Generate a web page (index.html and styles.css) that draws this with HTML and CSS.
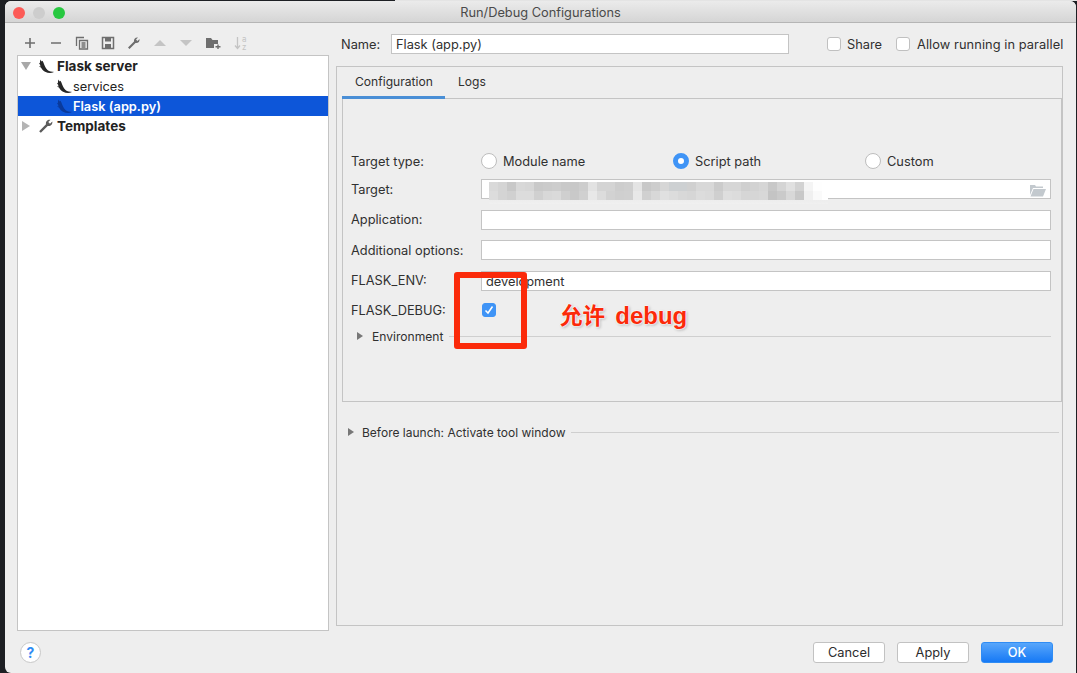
FILE: index.html
```html
<!DOCTYPE html>
<html>
<head>
    <title>Run/Debug Configurations</title>
    <link rel="stylesheet" href="styles.css">
</head>
<body>
    <svg class="defs" width="0" height="0">
        <symbol id="flask" viewBox="0 0 16 15">
            <path d="M2.500 0.500C0.800 5 2.800 10.500 7 12.700C10 14.200 13 14.300 15.500 13.300L15.500 12.700C12.500 13 10 12 8.200 9.500C6.700 7.500 5.800 4 4.500 1.800L3.600 2.600Z" fill="currentColor"/>
            <path d="M1 4.500L2.400 5M1.500 7.500L3 8" stroke="currentColor" stroke-width="0.800" fill="none"/>
        </symbol>
    </svg>
    <div class="window">
        <div class="titlebar">
            <div class="lights">
                <span class="light red"></span>
                <span class="light grey"></span>
                <span class="light green"></span>
            </div>
            <div class="title">Run/Debug Configurations</div>
        </div>
        <div class="main">
            <div class="sidebar">
                <div class="toolbar">
                    <svg width="14" height="14" viewBox="0 0 14 14"><path d="M7 2V12M2 7H12" stroke="#6e6e6e" stroke-width="1.600"/></svg>
                    <svg width="14" height="14" viewBox="0 0 14 14"><path d="M2 7H12" stroke="#6e6e6e" stroke-width="1.600"/></svg>
                    <svg width="14" height="14" viewBox="0 0 14 14"><path d="M1.500 10V1.500H9M4.500 4.500H12.500V13H4.500Z M6.500 7H10.500M6.500 9H10.500M6.500 11H10.500" stroke="#6e6e6e" stroke-width="1.300" fill="none"/></svg>
                    <svg width="14" height="14" viewBox="0 0 14 14"><path d="M1.500 1.500H12.500V12.500H1.500Z" stroke="#6e6e6e" stroke-width="1.500" fill="none"/><path d="M4 2H10V5.500H4ZM4 8H10V12.500H4Z" fill="#6e6e6e"/></svg>
                    <svg width="14" height="14" viewBox="0 0 14 14"><path d="M1 11.500L7 5.500C6.500 3 8.500 1 11 1.500L9 3.500L10.500 5L12.500 3C13 5.500 11 7.500 8.500 7L2.500 13Z" fill="#6e6e6e"/></svg>
                    <svg width="14" height="14" viewBox="0 0 14 14"><path d="M1 10L7 4L13 10Z" fill="#c4c4c4"/></svg>
                    <svg width="14" height="14" viewBox="0 0 14 14"><path d="M1 4L7 10L13 4Z" fill="#c4c4c4"/></svg>
                    <svg width="16" height="14" viewBox="0 0 16 14"><path d="M1 2H6L7.500 4H13V8H9V12H1Z" fill="#6e6e6e"/><path d="M13 8.500V13M10.500 10.800H15.500" stroke="#6e6e6e" stroke-width="1.400"/></svg>
                    <svg width="16" height="16" viewBox="0 0 16 16"><path d="M4.500 2V13M2 10.500L4.500 13.500L7 10.500" stroke="#c4c4c4" stroke-width="1.300" fill="none"/><text class="sort-letter" x="9" y="7">a</text><text class="sort-letter" x="9" y="15">z</text></svg>
                </div>
                <div class="tree">
                    <div class="tree-row bold">
                        <span class="arrow down"></span>
                        <svg class="flask" width="16" height="15"><use href="#flask"/></svg>
                        <span>Flask server</span>
                    </div>
                    <div class="tree-row child">
                        <svg class="flask" width="16" height="15"><use href="#flask"/></svg>
                        <span>services</span>
                    </div>
                    <div class="tree-row child selected">
                        <svg class="flask" width="16" height="15"><use href="#flask"/></svg>
                        <span>Flask (app.py)</span>
                    </div>
                    <div class="tree-row bold">
                        <span class="arrow right"></span>
                        <svg class="flask wrench" width="16" height="16" viewBox="0 0 14 14"><path d="M1 11.500L7 5.500C6.500 3 8.500 1 11 1.500L9 3.500L10.500 5L12.500 3C13 5.500 11 7.500 8.500 7L2.500 13Z" fill="#5c5c5c"/></svg>
                        <span>Templates</span>
                    </div>
                </div>
            </div>
            <div class="grip"></div>
            <div class="details">
                <div class="name-row">
                    <label class="name-label">Name:</label>
                    <div class="input name-input">Flask (app.py)</div>
                    <span class="check"></span><span class="check-label share">Share</span>
                    <span class="check"></span><span class="check-label parallel">Allow running in parallel</span>
                </div>
                <div class="outer-panel">
                    <div class="tabs">
                        <div class="tab active">Configuration</div>
                        <div class="tab">Logs</div>
                    </div>
                    <div class="config">
                        <div class="form">
                            <div class="form-row type-row">
                                <label>Target type:</label>
                                <div class="radios">
                                    <div class="radio-item wide"><span class="radio"></span>Module name</div>
                                    <div class="radio-item wide"><span class="radio on"></span>Script path</div>
                                    <div class="radio-item"><span class="radio"></span>Custom</div>
                                </div>
                            </div>
                            <div class="form-row">
                                <label>Target:</label>
                                <div class="input target">
                                    <div class="mosaic"></div>
                                    <svg class="folder" width="16" height="13" viewBox="0 0 16 13"><path d="M0 1H5L6 2.500H13V4H3L0 11Z M3.500 5H16L13 12.500H0.500Z" fill="#c3c9ce"/></svg>
                                </div>
                            </div>
                            <div class="form-row">
                                <label>Application:</label>
                                <div class="input"></div>
                            </div>
                            <div class="form-row">
                                <label>Additional options:</label>
                                <div class="input"></div>
                            </div>
                            <div class="form-row">
                                <label>FLASK_ENV:</label>
                                <div class="input">development</div>
                            </div>
                            <div class="form-row debug-row">
                                <label>FLASK_DEBUG:</label>
                                <span class="check on">
                                    <svg width="14" height="14" viewBox="0 0 14 14"><path d="M3.500 7.500L6 10L10.500 3.500" stroke="#fff" stroke-width="1.500" fill="none"/></svg>
                                </span>
                            </div>
                            <div class="section env-section">
                                <span class="arrow right small"></span>
                                <span>Environment</span>
                                <span class="rule"></span>
                            </div>
                        </div>
                    </div>
                    <div class="section launch-section">
                        <span class="arrow right small"></span>
                        <span>Before launch: Activate tool window</span>
                        <span class="rule"></span>
                    </div>
                </div>
            </div>
        </div>
        <div class="footer">
            <span class="help">?</span>
            <div class="buttons">
                <button>Cancel</button>
                <button>Apply</button>
                <button class="primary">OK</button>
            </div>
        </div>
    </div>

    <!-- annotation drawn on top of the screenshot -->
    <div class="mark-box"></div>
    <div class="mark-text">允许 <span class="mark-latin">debug</span></div>
</body>
</html>
```
FILE: styles.css
```css
* {
    box-sizing: border-box;
}

html, body {
    height: 100%;
}

body {
    margin: 0;
    background: linear-gradient(90deg, #1d1f23 395px, #e4e4e4 395px) top / 100% 1px no-repeat, #1d1f23;
    font-family: Inter, "Noto Sans CJK SC", sans-serif;
    font-size: 12.800px;
    color: #303030;
    position: relative;
    overflow: hidden;
}

.defs {
    display: block;
    position: absolute;
}

.window {
    margin: 1px 1px 0 5px;
    height: 672px;
    background-color: #eeeeee;
    border-radius: 6px 6px 0 6px;
    display: flex;
    flex-direction: column;
    overflow: hidden;
}

.titlebar {
    height: 22px;
    flex: none;
    padding-top: 2px;
    background: linear-gradient(#ebebeb, #d5d5d5);
    border-bottom: 1px solid #b5b5b5;
    display: flex;
    align-items: center;
    position: relative;
}

.lights {
    display: flex;
    gap: 8px;
    padding-left: 8px;
}

.light {
    width: 12px;
    height: 12px;
    border-radius: 50%;
}

.red { background-color: #fc5b57; }
.grey { background-color: #cdcdcd; }
.green { background-color: #27c840; }

.title {
    position: absolute;
    left: 0;
    right: 0;
    text-align: center;
    color: #4a4a4a;
}

.main {
    display: flex;
    height: 608px;
    flex: none;
    padding-top: 10px;
}

.sidebar {
    width: 312px;
    margin-left: 12px;
    flex: none;
}

.toolbar {
    height: 22px;
    display: flex;
    align-items: center;
    gap: 12px;
    padding: 0 0 2px 6px;
}

.sort-letter {
    font-size: 8px;
    fill: #c4c4c4;
}

.tree {
    height: 576px;
    background-color: #ffffff;
    border: 1px solid #c4c4c4;
}

.tree-row {
    height: 20px;
    display: flex;
    align-items: center;
    padding-left: 3px;
    color: #222222;
}

.tree-row.bold {
    font-weight: 700;
    font-size: 13.500px;
    gap: 3px;
}

.tree-row.child {
    padding-left: 38px;
    gap: 1px;
}

.tree-row.selected {
    background-color: #0d56d9;
    color: #ffffff;
    font-weight: 600;
}

.selected .flask {
    color: #0a3a9c;
}

.flask {
    color: #262626;
    flex: none;
}

.tree-row.bold .flask {
    margin-left: 4px;
}

.arrow {
    width: 0;
    height: 0;
    flex: none;
    border-style: solid;
    border-color: transparent;
}

.arrow.down {
    border-width: 8px 5px 0 5px;
    border-top-color: #a8a8a8;
}

.arrow.right {
    border-width: 5px 0 5px 8px;
    border-left-color: #b4b4b4;
    margin: 0 1px;
}

.arrow.small {
    border-width: 4px 0 4px 6px;
    border-left-color: #777777;
    margin: 0 9px 0 0;
}

.grip {
    width: 4px;
    flex: none;
    height: 14px;
    margin: 291px 2px 0 1px;
    background: radial-gradient(#bdbdbd 40%, transparent 45%) 0 0 / 2px 2px;
}

.details {
    flex: 1;
    padding-right: 13px;
}

.name-row {
    height: 22px;
    display: flex;
    align-items: center;
    margin-left: 5px;
    white-space: nowrap;
}

.name-label {
    width: 50px;
}

.input {
    height: 20px;
    flex: 1;
    background-color: #ffffff;
    border: 1px solid #c4c4c4;
    padding: 0 4px;
    line-height: 19px;
    position: relative;
}

.name-input {
    flex: none;
    width: 398px;
    margin-right: 38px;
}

.check {
    width: 14px;
    height: 14px;
    flex: none;
    background-color: #ffffff;
    border: 1px solid #c0c0c0;
    border-radius: 3px;
    margin-right: 6px;
}

.check-label.share {
    margin-right: 14px;
}

.check-label.parallel {
    margin-left: 1px;
    letter-spacing: 0.080px;
}

.check.on {
    background-color: #3f94f6;
    border-color: #3f94f6;
    margin: 0 0 0 1px;
    display: block;
}

.check.on svg {
    display: block;
    margin: -1px;
}

.outer-panel {
    height: 560px;
    margin-top: 11px;
    border: 1px solid #c4c4c4;
    padding: 0 0 0 5px;
}

.tabs {
    height: 32px;
    display: flex;
    border-bottom: 1px solid #c4c4c4;
    font-size: 12.100px;
}

.tab {
    padding: 0 13px;
    line-height: 29px;
    height: 32px;
}

.tab.active {
    width: 103px;
    border-bottom: 3px solid #4a8fd6;
}

.config {
    height: 303px;
    border: 1px solid #c4c4c4;
    border-top: none;
    padding: 52px 10px 0 8px;
}

.form-row {
    display: flex;
    align-items: center;
    height: 20px;
    margin-bottom: 10.500px;
}

.form-row label {
    width: 130px;
    flex: none;
    white-space: nowrap;
}

.type-row {
    margin-bottom: 8.400px;
}

.radios {
    display: flex;
}

.radio-item {
    display: flex;
    align-items: center;
    gap: 6px;
}

.radio-item.wide {
    width: 192px;
}

.radio {
    width: 16px;
    height: 16px;
    border-radius: 50%;
    background-color: #ffffff;
    border: 1px solid #bdbdbd;
}

.radio.on {
    border: 5px solid #3f94f6;
}

/* blurred-out path: three rows of 9px cells */
.mosaic {
    position: absolute;
    left: 7px;
    top: 2px;
    width: 339px;
    height: 22px;
    background:
        linear-gradient(90deg, #d9d9d9 0 9px, #d4d4d4 0 18px, #c8c8c8 0 27px, #d8d8d8 0 36px, #d6d6d6 0 45px, #c9c9c9 0 54px, #cbcbcb 0 63px, #cdcdcd 0 72px, #c9c9c9 0 81px, #c8c8c8 0 90px, #cdcdcd 0 99px, #e2e2e2 0 108px, #d4d4d4 0 126px, #cdcdcd 0 135px, #cfcfcf 0 144px, #e4e4e4 0 153px, #c8c8c8 0 162px, #cdcdcd 0 171px, #d6d6d6 0 180px, #cdd0d2 0 198px, #d0d0d0 0 207px, #d8d8d8 0 225px, #cbcbcb 0 234px, #d6d6d6 0 252px, #cfcfcf 0 261px, #d2d2d2 0 270px, #d6d6d6 0 279px, #c8c8c8 0 288px, #d4d4d4 0 297px, #e0e0e0 0 306px, #d2d2d2 0 315px, #f4f4f4 0 324px, #fefefe 0 333px, #ffffff 0) 0 0 / 100% 9px no-repeat,
        linear-gradient(90deg, #dcdcdc 0 9px, #d4d4d4 0 18px, #d0d0d0 0 27px, #dcdcdc 0 45px, #d0d0d0 0 54px, #d8d8d8 0 63px, #dadada 0 72px, #cfcfcf 0 81px, #c9c9c9 0 90px, #d0d0d0 0 99px, #e8e8e8 0 108px, #dcdcdc 0 117px, #d2d2d2 0 126px, #cfcfcf 0 135px, #d0d0d0 0 144px, #e8e8e8 0 153px, #d0d0d0 0 162px, #d8d8d8 0 171px, #e0e0e0 0 180px, #dcdcdc 0 189px, #d8d8d8 0 198px, #d6d6d6 0 207px, #dcdcdc 0 216px, #dadada 0 225px, #cfcfcf 0 234px, #dedede 0 243px, #dcdcdc 0 252px, #d6d6d6 0 270px, #d8d8d8 0 279px, #c4c4c4 0 288px, #cacaca 0 297px, #d8d8d8 0 306px, #c8c8c8 0 315px, #f0f0f0 0 324px, #fafafa 0 333px, #ffffff 0) 0 9px / 100% 9px no-repeat,
        linear-gradient(#ededed, #f0f0f0) 0 18px / 100% 4px no-repeat;
}

.folder {
    position: absolute;
    right: 4px;
    top: 4px;
}

.debug-row {
    margin-top: -1px;
    margin-bottom: 6px;
}

.section {
    display: flex;
    align-items: center;
    height: 20px;
}

.env-section {
    padding-left: 6px;
    font-size: 12.100px;
}

.launch-section {
    margin: 20px 3px 0 0;
    padding-left: 6px;
    font-size: 12px;
}

.launch-section .arrow.small {
    margin-right: 8px;
}

.rule {
    flex: 1;
    height: 1px;
    background-color: #cfcfcf;
    margin-left: 6px;
}

.footer {
    height: 42px;
    flex: none;
    display: flex;
    align-items: flex-start;
    justify-content: space-between;
    padding: 11px 23px 0 15px;
}

.help {
    width: 21px;
    height: 21px;
    border-radius: 50%;
    background-color: #ffffff;
    border: 1px solid #c8c8c8;
    color: #2f8cf4;
    font-size: 14px;
    font-weight: 700;
    text-align: center;
    line-height: 19px;
}

.buttons {
    display: flex;
    gap: 12px;
}

button {
    width: 72px;
    height: 21px;
    padding: 0;
    font-family: inherit;
    font-size: 12.800px;
    color: #2b2b2b;
    background-color: #ffffff;
    border: 1px solid #c2c2c2;
    border-radius: 3px;
}

button.primary {
    background: linear-gradient(#58a6fb, #1679f5);
    border-color: #2f8cf4;
    color: #ffffff;
    font-weight: 500;
}

.mark-box {
    position: absolute;
    left: 454px;
    top: 272px;
    width: 73px;
    height: 77px;
    border: 6px solid #fb2a0a;
    border-radius: 3px;
}

.mark-text {
    position: absolute;
    left: 560px;
    top: 302px;
    font-size: 22.500px;
    line-height: 28px;
    font-weight: 700;
    font-family: "Liberation Sans", "Noto Sans CJK SC", sans-serif;
    color: #fb2a0a;
    text-shadow: 0 0 2px #ffffff, 0 0 2px #ffffff, 0 0 2px #ffffff, 1px 1px 3px #9a9a9a;
}

.mark-latin {
    font-size: 24px;
    margin-left: 4px;
}
```
